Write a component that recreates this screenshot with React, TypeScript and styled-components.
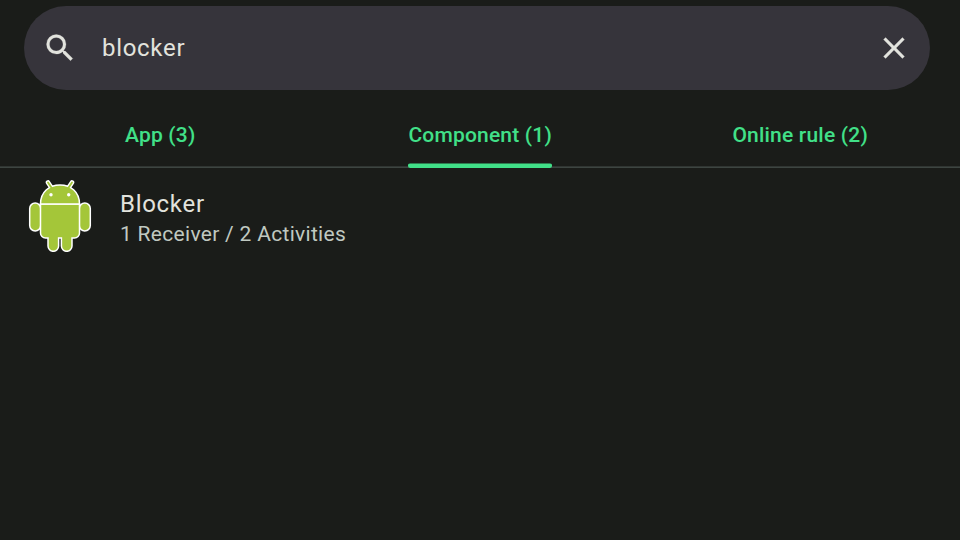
import React from 'react';
import styled, { createGlobalStyle } from 'styled-components';

const GlobalStyle = createGlobalStyle`
  * { box-sizing: border-box; }
  body { margin: 0; background: #1a1c19; font-family: Roboto, sans-serif; }
`;

const Screen = styled.main`
  width: 960px;
  height: 540px;
  overflow: hidden;
  padding-top: 6px;
  background: #1a1c19;
`;

const SearchBar = styled.div`
  display: flex;
  align-items: center;
  height: 84px;
  margin: 0 30px 0 24px;
  padding: 0 18px;
  border-radius: 42px;
  background: #36343b;
`;

const Icon = styled.svg`
  display: block;
  flex: none;
  width: 36px;
  height: 36px;
  fill: #e2e3dd;
  stroke: #e2e3dd;
  stroke-width: 0.15px;
`;

const Query = styled.span`
  flex: 1;
  margin-left: 24px;
  color: #e2e3dd;
  font-size: 24px;
  line-height: 36px;
  letter-spacing: 0.7px;
`;

const TabRow = styled.nav`
  display: grid;
  grid-template-columns: repeat(3, 1fr);
  height: 78px;
  box-shadow: inset 0 -1px #3d4541, inset 0 -2px #303532;
`;

const Tab = styled.div`
  display: flex;
  justify-content: center;
`;

const TabLabel = styled.span<{ $active?: boolean }>`
  position: relative;
  height: 78px;
  padding: 30px 0 0 0.4px;
  color: #41e088;
  font-size: 21px;
  font-weight: 500;
  line-height: 30px;
  letter-spacing: 0.2px;
  white-space: nowrap;

  &::after {
    content: '';
    display: ${(p) => (p.$active ? 'block' : 'none')};
    position: absolute;
    left: -0.2px;
    right: -0.2px;
    bottom: 0;
    height: 5px;
    border-radius: 2.5px;
    background: linear-gradient(#2e7e51 1px, #41e088 1px);
  }
`;

const ResultRow = styled.article`
  display: flex;
  align-items: center;
  height: 96px;
  padding-left: 24px;
`;

const AppIcon = styled.svg`
  display: block;
  width: 72px;
  height: 72px;
`;

const Details = styled.div`
  margin-left: 24px;
  padding-top: 6px;
`;

const Title = styled.div`
  color: #e2e3dd;
  font-size: 24px;
  line-height: 30px;
  letter-spacing: 0.7px;
`;

const Summary = styled.div`
  color: #c0c9c1;
  font-size: 21px;
  line-height: 30px;
  letter-spacing: 0.3px;
`;

const tabs = ['App (3)', 'Component (1)', 'Online rule (2)'];

function Robot() {
  return (
    <AppIcon viewBox="0 0 72 72" fill="#a4c639" stroke="#fff" strokeWidth="1.5">
      <path d="M24 2.5 L29 10 M48 2.5 L43 10" strokeWidth="4.6" strokeLinecap="round" />
      <rect x="5.7" y="23" width="11" height="28" rx="5.5" />
      <rect x="55.3" y="23" width="11" height="28" rx="5.5" />
      <path d="M16.5 24h39v29a5 5 0 0 1-5 5H48v8a5.3 5.3 0 0 1-10.6 0v-8h-2.8v8a5.3 5.3 0 0 1-10.6 0v-8h-2.5a5 5 0 0 1-5-5Z" />
      <path d="M16.5 24C16.5 12 25 5 36 5s19.5 7 19.5 19Z" />
      <path d="M24 2.5 L29 10 M48 2.5 L43 10" stroke="#a4c639" strokeWidth="1.8" strokeLinecap="round" />
      <circle cx="27" cy="14.7" r="1.7" fill="#fff" stroke="none" />
      <circle cx="44.7" cy="14.7" r="1.7" fill="#fff" stroke="none" />
    </AppIcon>
  );
}

export default function App() {
  return (
    <Screen>
      <GlobalStyle />
      <SearchBar>
        <Icon viewBox="0 0 24 24">
          <path d="M15.5 14h-.79l-.28-.27A6.471 6.471 0 0 0 16 9.5 6.5 6.5 0 1 0 9.5 16c1.61 0 3.09-.59 4.23-1.57l.27.28v.79l5 4.99L20.49 19l-4.99-5zm-6 0C7.01 14 5 11.99 5 9.5S7.01 5 9.5 5 14 7.01 14 9.5 11.99 14 9.5 14z" />
        </Icon>
        <Query>blocker</Query>
        <Icon viewBox="0 0 24 24">
          <path d="M19 6.41 17.59 5 12 10.59 6.41 5 5 6.41 10.59 12 5 17.59 6.41 19 12 13.41 17.59 19 19 17.59 13.41 12z" />
        </Icon>
      </SearchBar>
      <TabRow>
        {tabs.map((t, i) => (
          <Tab key={t}>
            <TabLabel $active={i === 1}>{t}</TabLabel>
          </Tab>
        ))}
      </TabRow>
      <ResultRow>
        <Robot />
        <Details>
          <Title>Blocker</Title>
          <Summary>1 Receiver / 2 Activities</Summary>
        </Details>
      </ResultRow>
    </Screen>
  );
}
